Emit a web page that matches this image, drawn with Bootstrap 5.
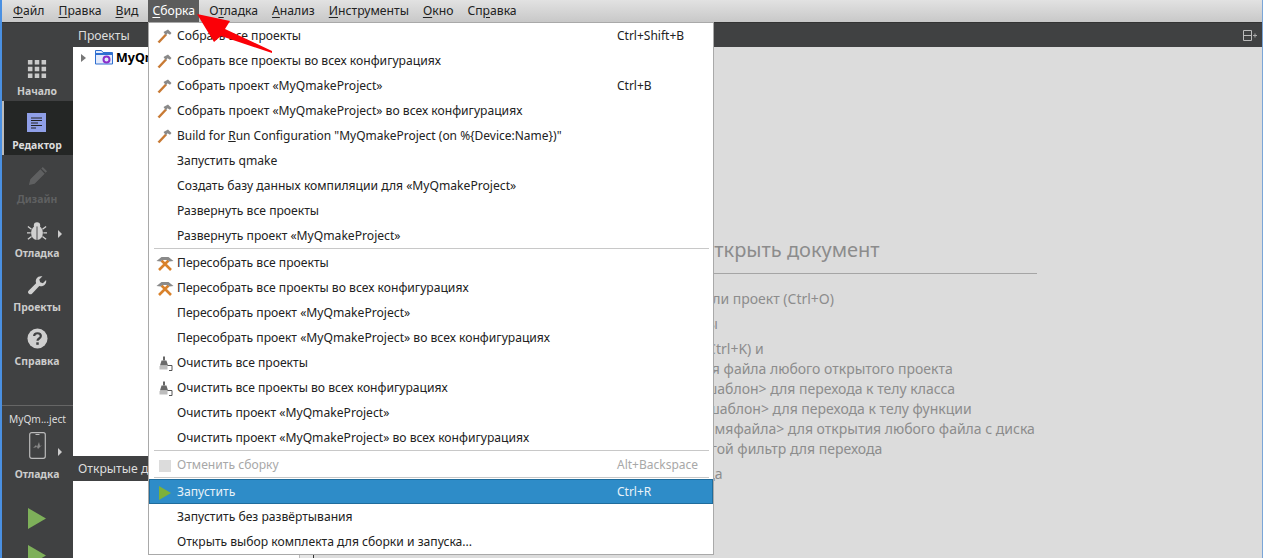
<!DOCTYPE html>
<html lang="ru"><head><meta charset="utf-8">
<link href="https://cdn.jsdelivr.net/npm/bootstrap@5.3.0/dist/css/bootstrap.min.css" rel="stylesheet">
<style>
html,body{margin:0;height:558px;overflow:hidden;background:#ddd}
body,.qt-root{font-family:"Noto Sans","Open Sans",sans-serif;font-size:12px;color:#111;line-height:1.2}
.qt-root{width:1263px;height:558px;position:relative;overflow:hidden;border-right:1px solid #7aa6d8}
.qt-menubar{height:22px;background:linear-gradient(#e2e2e2,#c8c8c8);padding-left:4px;border-left:2px solid #4a90e2;font-size:12.2px}
.qt-mi{padding:0 7px;height:22px;line-height:21px;white-space:nowrap;color:#222}
.qt-mi u{text-underline-offset:2px}
.qt-mi.qt-open{background:#5c5c5c;color:#fff;padding:0 4px;margin:0 3px 0 3px}
.qt-body{height:536px}
.qt-side{width:73px;background:#404142;border-left:2px solid #4a90e2;flex:none;color:#ccc;font-weight:700;font-size:10.4px;text-align:center}
.qt-topspace{height:25px;border-top:1px solid #333}
.qt-mode{height:54px;position:relative}
.qt-mode.qt-act{background:#242625;color:#ddd;box-shadow:inset 2px 0 0 #bbb}
.qt-mode svg{display:block;margin:0 auto}
.qt-mode .qt-ic{height:32px;display:flex;align-items:flex-end;justify-content:center;padding-right:1px}
.qt-mode .qt-lb{margin-top:6px;padding-right:1px}
.qt-dim{color:#5f6061}
.qt-tri{position:absolute;right:11px;top:21px;width:0;height:0;border-left:4px solid #ccc;border-top:4px solid transparent;border-bottom:4px solid transparent}
.qt-kit{border-top:1px solid #666;margin-top:34px;padding-top:7px;font-weight:400;font-size:10.2px;color:#ddd}
.qt-kitm .qt-ic{height:34px}
.qt-kitm .qt-lb{margin-top:9px}
.qt-kitm .qt-tri{top:23px}
.qt-play1{margin-top:29px}
.qt-play2{margin-top:16px}
.qt-plays{padding-right:1px}
.qt-plays svg{display:block;margin:0 auto}
.qt-panes{width:241px;flex:none;background:#fff;border-right:1px solid #333}
.qt-phead{height:25px;background:#404142;color:#ddd;padding-left:5px;line-height:26px;font-size:12.2px}
.qt-ptop{border-top:1px solid #333}
.qt-tree{height:409px;padding:2px 0 0 7px}
.qt-proj{font-size:12.5px;line-height:18px;margin-left:-1px;color:#000}
.qt-odoc{height:77px}
.qt-sbar{width:14px;background:#e6e6e6;border-left:1px solid #bbb}
.qt-main{flex:1 1 auto;background:#dcdcdc;min-width:0}
.qt-mhead{height:25px;background:#404142;border-top:1px solid #333;padding-right:5px}
.qt-welcome{padding-top:189px;color:#8c8c8c;font-size:14px;white-space:nowrap}
.qt-h{font-size:20px;line-height:28px;height:28px;margin-left:385px}
.qt-rule{border-top:1px solid #a5a5a5;width:496px;margin:9px 0 15px 227px}
.qt-wl{line-height:20px;height:20px}
.qt-gap{margin-bottom:5px}
.qt-w1{margin-left:229px}.qt-w2{margin-left:227px}.qt-w3{margin-left:227px}
.qt-w4{margin-left:321px}.qt-w5{margin-left:315px}.qt-w6{margin-left:311px}
.qt-w7{margin-left:318px}.qt-w8{margin-left:304px}.qt-w9{margin-left:278px}
.qt-menu{position:absolute;left:148px;top:22px;width:566px;background:#fff;border:1px solid #a9a9a9;z-index:5}
.qt-row{height:25px;display:flex;align-items:center;color:#222;white-space:nowrap;font-size:12.13px;padding-top:2px}
.qt-row .qt-mic{width:28px;flex:none;display:flex;justify-content:center;padding-left:3px}
.qt-row .qt-txt{flex:1 1 auto}
.qt-row .qt-sc{width:96px;flex:none;font-size:12px}
.qt-row .qt-lat{font-size:11.98px}
.qt-sep{border-top:1px solid #c8c8c8;margin:0 4px 1px 5px;height:0}
.qt-row.qt-off{color:#a8a8a8}
.qt-row.qt-hl{background:#2e8cc8;color:#e8f2f8;box-shadow:inset 0 0 0 1px #1f6c9c}
.qt-arrow{position:absolute;left:0;top:0;z-index:9;pointer-events:none}
</style></head>
<body>
<svg width="0" height="0" class="position-absolute"><defs>
<g id="ham"><path d="M2.500 14.500 10 6.500" stroke="#c87a34" stroke-width="2.500" fill="none"/><path d="M7.500 4 12 1.500 15.500 5 14 6.800 11.500 5.200 10 7.500z" fill="#8a8a8a"/></g>
<g id="ham2"><path d="M3 14 12.500 4.500M15 14 5.500 4.500" stroke="#d9822b" stroke-width="2.600" fill="none"/><path d="M.5 5 5.500 1h7l5 4-4 .5-2-1.500H6.500l-2 1.500z" fill="#8a8a8a"/></g>
<g id="brm"><path d="M6 .5h2v4h-2z" fill="#666"/><path d="M4.500 4.500h5l1.500 5H3z" fill="#6a6a6a"/><path d="M2.500 10h8v3.500h-8z" fill="#bdbdbd"/><path d="M10.500 9.500H15M15 9.500v5M12 14.500h3" stroke="#555" fill="none"/></g>
<g id="playg"><path d="M0 0 18 10.500 0 21z" fill="#7eb05a"/></g>
</defs></svg>
<div class="qt-root">
 <div class="qt-menubar d-flex">
  <div class="qt-mi"><u>Ф</u>айл</div><div class="qt-mi"><u>П</u>равка</div><div class="qt-mi"><u>В</u>ид</div>
  <div class="qt-mi qt-open"><u>С</u>борка</div><div class="qt-mi">О<u>т</u>ладка</div><div class="qt-mi"><u>А</u>нализ</div><div class="qt-mi"><u>И</u>нструменты</div><div class="qt-mi"><u>О</u>кно</div><div class="qt-mi">Сп<u>р</u>авка</div>
 </div>
 <div class="qt-body d-flex">
  <div class="qt-side">
   <div class="qt-topspace"></div>
   <div class="qt-mode"><div class="qt-ic"><svg width="20" height="20" viewBox="0 0 22 22" fill="#c9c9c9"><path d="M1 1h5v5H1zM8.500 1h5v5h-5zM16 1h5v5h-5zM1 8.500h5v5H1zM8.500 8.500h5v5h-5zM16 8.500h5v5h-5zM1 16h5v5H1zM8.500 16h5v5h-5zM16 16h5v5h-5z"/></svg></div><div class="qt-lb">Начало</div></div>
   <div class="qt-mode qt-act"><div class="qt-ic"><svg width="20" height="20"><rect width="19" height="19" fill="#8f9fe8"/><path d="M4 5h11M4 7.500h11M4 10h7M4 12.500h11M4 15h5" stroke="#222" stroke-width="1"/></svg></div><div class="qt-lb">Редактор</div></div>
   <div class="qt-mode qt-dim"><div class="qt-ic"><svg width="21" height="21" viewBox="0 0 22 22" fill="#5f6061"><path d="M2 20l1.500-6L14 3.500l4.500 4.500L8 18.500zM15 2.500l1.500-1.500 4.500 4.500-1.500 1.500z"/></svg></div><div class="qt-lb">Дизайн</div></div>
   <div class="qt-mode"><div class="qt-ic"><svg width="20" height="20" viewBox="0 0 22 22" fill="#d0d0d0"><ellipse cx="11" cy="13" rx="6.500" ry="8"/><circle cx="11" cy="5" r="3.500"/><path d="M11 6v15" stroke="#404142"/><path d="M5 9 1 6M4 13H0M5 17l-4 3M17 9l4-3M18 13h4M17 17l4 3" stroke="#d0d0d0" stroke-width="1.500"/></svg></div><div class="qt-lb">Отладка</div><span class="qt-tri"></span></div>
   <div class="qt-mode"><div class="qt-ic"><svg width="20" height="20" viewBox="0 0 22 22" fill="#cfcfcf"><path d="M2 20.500c-1.500-1.500-1-2.500 0-3.500l8-8c-1-3 0-5.500 2.500-7 1.500-.8 3-.8 4.500-.5l-3.500 3.500 1 3 3 1L21 5.500c.5 2-.2 4-1.500 5.300-1.800 1.700-4 2-6 1.200l-8 8.500c-1 1-2.200 1-3.500 0z"/></svg></div><div class="qt-lb">Проекты</div></div>
   <div class="qt-mode"><div class="qt-ic"><svg width="21" height="21" viewBox="0 0 22 22"><circle cx="11" cy="11" r="10.500" fill="#cfcfcf"/><path d="M7.500 8.500C7.500 6.500 9 5.500 11 5.500s3.500 1.100 3.500 3c0 2.500-3.500 2.500-3.500 4.800" stroke="#404142" stroke-width="2.300" fill="none"/><rect x="9.700" y="15" width="2.600" height="2.600" fill="#404142"/></svg></div><div class="qt-lb">Справка</div></div>
   <div class="qt-kit">MyQm...ject</div>
   <div class="qt-mode qt-kitm"><div class="qt-ic"><svg width="17" height="27"><rect x=".7" y=".7" width="15.600" height="25.600" rx="2" fill="none" stroke="#bbb" stroke-width="1.200"/><path d="M6.500 2.500h4" stroke="#bbb"/><path d="M4 16l3-3 1 2 2-5 1 4 2-1-4 4-1-2z" fill="#888"/></svg></div><div class="qt-lb">Отладка</div><span class="qt-tri"></span></div>
   <div class="qt-plays qt-play1"><svg width="18" height="21"><use href="#playg"/></svg></div>
   <div class="qt-plays qt-play2"><svg width="18" height="21"><use href="#playg"/></svg></div>
  </div>
  <div class="qt-panes">
   <div class="qt-phead qt-ptop">Проекты</div>
   <div class="qt-tree d-flex align-items-start gap-1">
    <svg width="7" height="18" class="me-1"><path d="M1 5l5 4-5 4z" fill="#777"/></svg>
    <svg width="18" height="16"><path d="M.5 1.500h6l1.500 2h9.500v11.500H.500z" fill="#e3ebfc" stroke="#2f6fd0"/><path d="M1 5h16" stroke="#2f6fd0" stroke-width="2"/><circle cx="11.500" cy="10.500" r="3" fill="none" stroke="#8b2fc9" stroke-width="2"/></svg>
    <b class="qt-proj">MyQmakeProject</b>
   </div>
   <div class="qt-phead">Открытые документы</div>
   <div class="qt-odoc d-flex justify-content-end"><div class="qt-sbar"></div></div>
  </div>
  <div class="qt-main">
   <div class="qt-mhead d-flex justify-content-end align-items-center"><svg width="14" height="13" fill="none" stroke="#bbb"><path d="M.5 1.500h8v10h-8zM.5 6.500h8"/><path d="M10 6.500h4M12 4.500v4" stroke="#aaa"/></svg></div>
   <div class="qt-welcome">
    <div class="qt-h">Открыть документ</div>
    <div class="qt-rule"></div>
    <div class="qt-wl qt-gap qt-w1">• Файл &gt; Открыть файл или проект (Ctrl+O)</div>
    <div class="qt-wl qt-gap qt-w2">• Файл &gt; Недавние файлы</div>
    <div class="qt-wl qt-w3">• Инструменты &gt; Найти (Ctrl+K) и</div>
    <div class="qt-wl qt-w4">- ввести имя файла любого открытого проекта</div>
    <div class="qt-wl qt-w5">- ввести c &lt;шаблон&gt; для перехода к телу класса</div>
    <div class="qt-wl qt-w6">- ввести m &lt;шаблон&gt; для перехода к телу функции</div>
    <div class="qt-wl qt-w7">- ввести f &lt;имяфайла&gt; для открытия любого файла с диска</div>
    <div class="qt-wl qt-gap qt-w8">- выбрать другой фильтр для перехода</div>
    <div class="qt-wl qt-w9">• Перетащить сюда</div>
   </div>
  </div>
 </div>
 <div class="qt-menu">
  <div class="qt-row"><span class="qt-mic"><svg width="17" height="17"><use href="#ham"/></svg></span><span class="qt-txt">Собрать все проекты</span><span class="qt-sc">Ctrl+Shift+B</span></div>
  <div class="qt-row"><span class="qt-mic"><svg width="17" height="17"><use href="#ham"/></svg></span><span class="qt-txt">Собрать все проекты во всех конфигурациях</span></div>
  <div class="qt-row"><span class="qt-mic"><svg width="17" height="17"><use href="#ham"/></svg></span><span class="qt-txt">Собрать проект «MyQmakeProject»</span><span class="qt-sc">Ctrl+B</span></div>
  <div class="qt-row"><span class="qt-mic"><svg width="17" height="17"><use href="#ham"/></svg></span><span class="qt-txt">Собрать проект «MyQmakeProject» во всех конфигурациях</span></div>
  <div class="qt-row"><span class="qt-mic"><svg width="17" height="17"><use href="#ham"/></svg></span><span class="qt-txt qt-lat">Build for <u>R</u>un Configuration "MyQmakeProject (on %{Device:Name})"</span></div>
  <div class="qt-row"><span class="qt-mic"></span><span class="qt-txt">Запустить qmake</span></div>
  <div class="qt-row"><span class="qt-mic"></span><span class="qt-txt">Создать базу данных компиляции для «MyQmakeProject»</span></div>
  <div class="qt-row"><span class="qt-mic"></span><span class="qt-txt">Развернуть все проекты</span></div>
  <div class="qt-row"><span class="qt-mic"></span><span class="qt-txt">Развернуть проект «MyQmakeProject»</span></div>
  <div class="qt-sep"></div>
  <div class="qt-row"><span class="qt-mic"><svg width="18" height="15"><use href="#ham2"/></svg></span><span class="qt-txt">Пересобрать все проекты</span></div>
  <div class="qt-row"><span class="qt-mic"><svg width="18" height="15"><use href="#ham2"/></svg></span><span class="qt-txt">Пересобрать все проекты во всех конфигурациях</span></div>
  <div class="qt-row"><span class="qt-mic"></span><span class="qt-txt">Пересобрать проект «MyQmakeProject»</span></div>
  <div class="qt-row"><span class="qt-mic"></span><span class="qt-txt">Пересобрать проект «MyQmakeProject» во всех конфигурациях</span></div>
  <div class="qt-row"><span class="qt-mic"><svg width="16" height="15"><use href="#brm"/></svg></span><span class="qt-txt">Очистить все проекты</span></div>
  <div class="qt-row"><span class="qt-mic"><svg width="16" height="15"><use href="#brm"/></svg></span><span class="qt-txt">Очистить все проекты во всех конфигурациях</span></div>
  <div class="qt-row"><span class="qt-mic"></span><span class="qt-txt">Очистить проект «MyQmakeProject»</span></div>
  <div class="qt-row"><span class="qt-mic"></span><span class="qt-txt">Очистить проект «MyQmakeProject» во всех конфигурациях</span></div>
  <div class="qt-sep"></div>
  <div class="qt-row qt-off"><span class="qt-mic"><svg width="12" height="12"><rect width="12" height="12" fill="#dcdcdc"/></svg></span><span class="qt-txt">Отменить сборку</span><span class="qt-sc">Alt+Backspace</span></div>
  <div class="qt-sep"></div>
  <div class="qt-row qt-hl"><span class="qt-mic"><svg width="12" height="14"><path d="M0 0 12 7 0 14z" fill="#7eb03a"/></svg></span><span class="qt-txt">Запустить</span><span class="qt-sc">Ctrl+R</span></div>
  <div class="qt-row"><span class="qt-mic"></span><span class="qt-txt">Запустить без развёртывания</span></div>
  <div class="qt-row"><span class="qt-mic"></span><span class="qt-txt">Открыть выбор комплекта для сборки и запуска...</span></div>
 </div>
 <svg class="qt-arrow" width="300" height="60"><path d="M197 14 230 21 225 29 272 51 272 53 221 36 214 42z" fill="#fb0007"/></svg>
</div>
</body></html>
